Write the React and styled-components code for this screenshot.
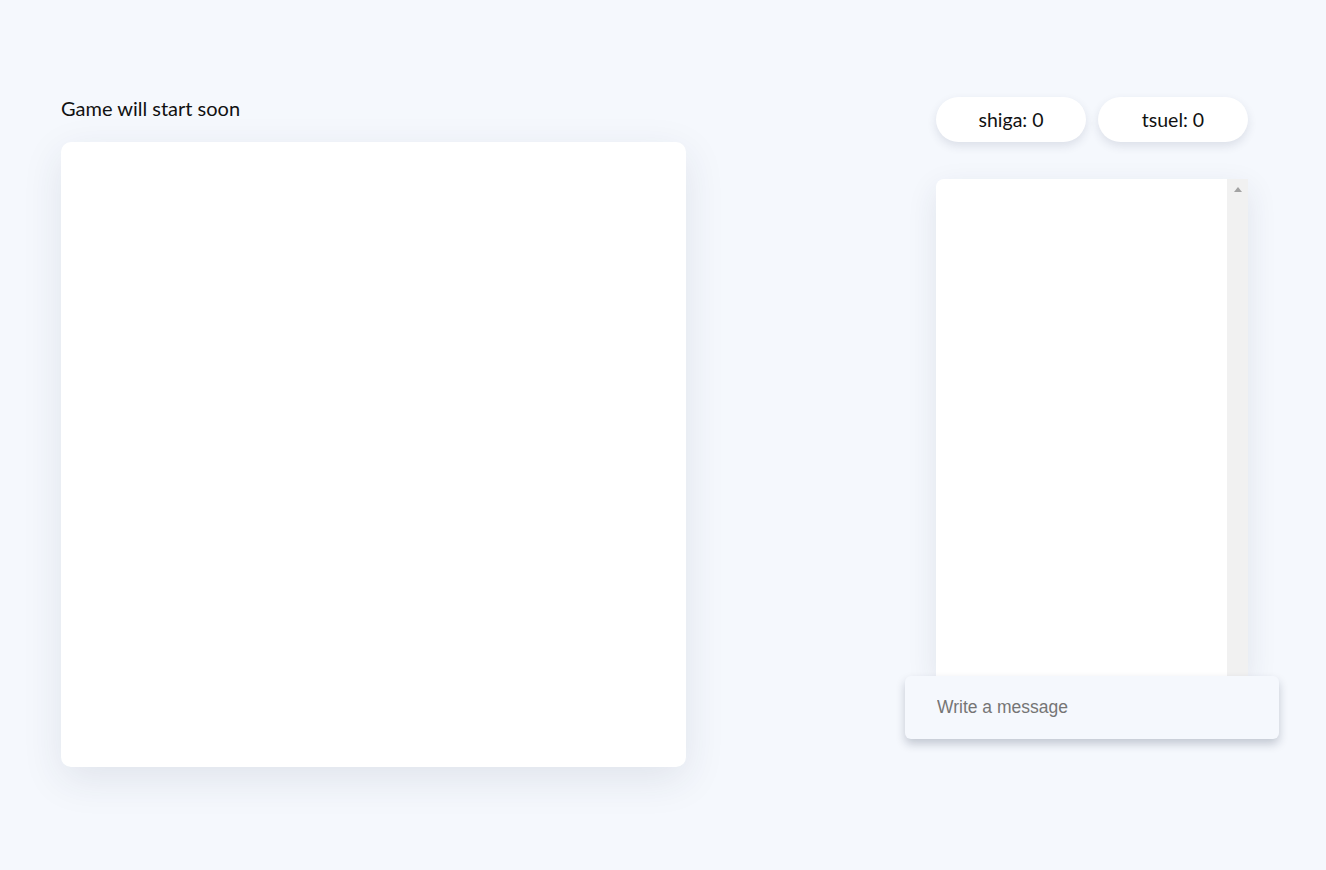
import React from 'react';
import styled, { createGlobalStyle } from 'styled-components';

const GlobalStyle = createGlobalStyle`
  html, body {
    margin: 0;
    padding: 0;
    background: #f5f8fd;
    font-family: Lato, "Open Sans", sans-serif;
    color: #111;
  }
`;

const Page = styled.div`
  min-height: 870px;
  box-sizing: border-box;
  padding: 97px 47px 0 61px;
  display: flex;
  justify-content: space-between;
  align-items: flex-start;
`;

const GameColumn = styled.div`
  display: flex;
  flex-direction: column;
`;

const Status = styled.div`
  font-size: 20px;
  line-height: 22px;
  margin-bottom: 23px;
`;

const Board = styled.div`
  width: 625px;
  height: 625px;
  background: #fff;
  border-radius: 10px;
  box-shadow: 0 12px 40px rgba(40, 50, 80, 0.1);
`;

const SideColumn = styled.div`
  width: 374px;
  display: flex;
  flex-direction: column;
  align-items: center;
`;

const Scores = styled.div`
  display: flex;
  gap: 12px;
  margin-bottom: 37px;
`;

const ScorePill = styled.div`
  width: 150px;
  height: 45px;
  border-radius: 23px;
  background: #fff;
  display: flex;
  align-items: center;
  justify-content: center;
  font-size: 19.5px;
  box-shadow: 0 4px 10px rgba(40, 50, 80, 0.12);
`;

const ChatBox = styled.div`
  width: 312px;
  height: 497px;
  display: flex;
  background: #fff;
  border-radius: 8px 0 0 0;
  box-shadow: 0 10px 30px rgba(40, 50, 80, 0.1);
  overflow: hidden;
`;

const Messages = styled.div`
  flex: 1;
`;

const ScrollTrack = styled.div`
  width: 21px;
  background: #f1f1f1;
  display: flex;
  justify-content: center;
  padding-top: 8px;
  box-sizing: border-box;
`;

const ArrowUp = styled.div`
  width: 0;
  height: 0;
  border-left: 4px solid transparent;
  border-right: 4px solid transparent;
  border-bottom: 5px solid #a3a3a3;
`;

const MessageInput = styled.input`
  width: 374px;
  height: 63px;
  box-sizing: border-box;
  border: none;
  outline: none;
  border-radius: 6px;
  background: #f5f8fd;
  padding: 0 0 0 32px;
  font-family: "Liberation Sans", Arial, sans-serif;
  font-size: 17.5px;
  color: #333;
  box-shadow: 0 5px 10px rgba(20, 30, 60, 0.22);
  position: relative;
  &::placeholder {
    color: #757575;
  }
`;

const App = () => {
  return (
    <>
      <GlobalStyle />
      <Page>
        <GameColumn>
          <Status>Game will start soon</Status>
          <Board />
        </GameColumn>
        <SideColumn>
          <Scores>
            <ScorePill>shiga: 0</ScorePill>
            <ScorePill>tsuel: 0</ScorePill>
          </Scores>
          <ChatBox>
            <Messages />
            <ScrollTrack>
              <ArrowUp />
            </ScrollTrack>
          </ChatBox>
          <MessageInput placeholder='Write a message' />
        </SideColumn>
      </Page>
    </>
  );
};

export default App;
